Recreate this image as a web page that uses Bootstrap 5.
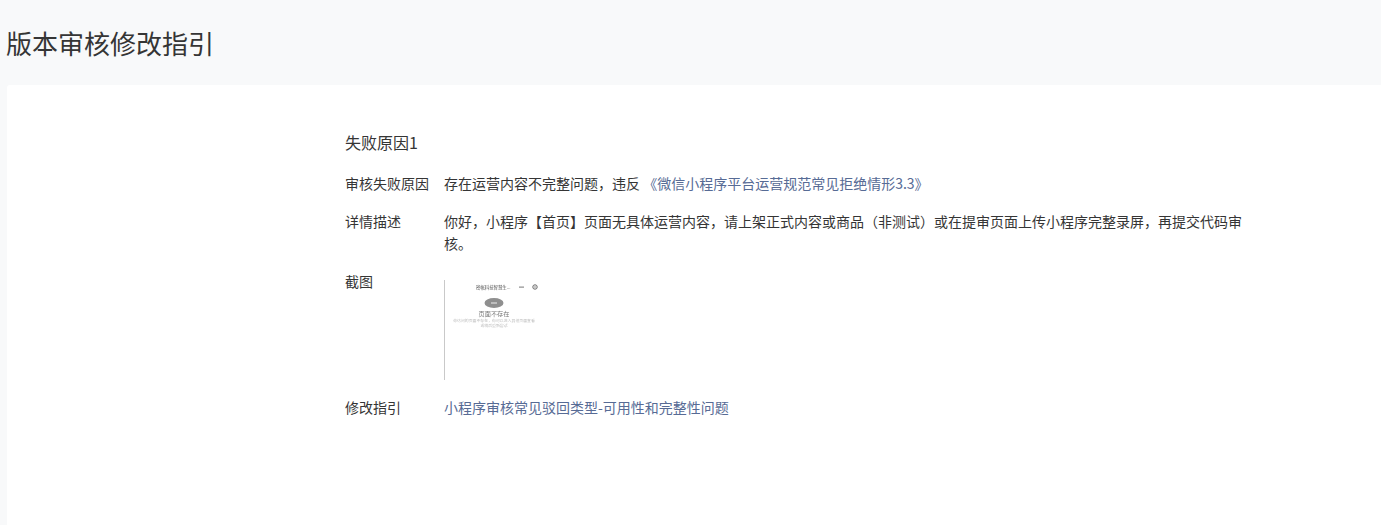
<!DOCTYPE html>
<html lang="zh-CN">
<head>
<meta charset="utf-8">
<title>版本审核修改指引</title>
<link href="https://cdn.jsdelivr.net/npm/bootstrap@5.3.0/dist/css/bootstrap.min.css" rel="stylesheet">
<style>
html,body{height:100%;}
body{background:#f8f9fa;color:#353535;font-family:"Noto Sans CJK SC","Liberation Sans",sans-serif;font-size:14px;line-height:22px;overflow:hidden;}
.page-head{height:85px;padding-left:6px;}
.page-title{font-size:26px;line-height:36px;font-weight:400;color:#353535;margin:0;}
.sheet{margin-left:7px;min-height:440px;background:#fff;border-radius:3px 0 0 0;padding:45px 0 0 338px;}
.reason-title{font-size:16px;line-height:24px;font-weight:400;margin:0 0 18px;color:#353535;}
.info-row{display:flex;width:900px;margin-bottom:16px;}
.info-label{flex:0 0 99px;}
.info-value{flex:1 1 auto;min-width:0;padding-right:3px;}
.info-value a{color:#576b95;text-decoration:none;}
.shot{display:block;margin-top:10px;width:100px;height:100px;filter:blur(.45px);}
.shot text{font-family:"Noto Sans CJK SC",sans-serif;}
</style>
</head>
<body>
<header class="page-head d-flex align-items-center">
  <h1 class="page-title">版本审核修改指引</h1>
</header>
<main class="sheet">
  <h2 class="reason-title">失败原因1</h2>
  <div class="info-row">
    <div class="info-label">审核失败原因</div>
    <div class="info-value">存在运营内容不完整问题，违反 <a href="#">《微信小程序平台运营规范常见拒绝情形3.3》</a></div>
  </div>
  <div class="info-row">
    <div class="info-label">详情描述</div>
    <div class="info-value">你好，小程序【首页】页面无具体运营内容，请上架正式内容或商品（非测试）或在提审页面上传小程序完整录屏，再提交代码审核。</div>
  </div>
  <div class="info-row">
    <div class="info-label">截图</div>
    <div class="info-value">
      <svg class="shot" viewBox="0 0 100 100" role="img" aria-label="截图">
        <rect x="0" y="0" width="1" height="100" fill="#c9c9c9"/>
        <text x="32" y="9" font-size="4.4" fill="#555">密帐科技智慧生...</text>
        <rect x="75" y="6.6" width="5" height="1" fill="#777"/>
        <circle cx="91" cy="7" r="2.2" fill="none" stroke="#666" stroke-width="1"/>
        <circle cx="91" cy="7" r=".7" fill="#666"/>
        <ellipse cx="50" cy="23" rx="9.5" ry="5" fill="#8f8f8f"/>
        <rect x="47" y="22.5" width="6" height="1" fill="#eee"/>
        <text x="50" y="36" font-size="6.2" fill="#777" text-anchor="middle">页面不存在</text>
        <text x="50" y="42" font-size="3.9" fill="#bbb" text-anchor="middle">你访问的页面不存在，你可以进入其他页面查看</text>
        <text x="50" y="47" font-size="3.9" fill="#bbb" text-anchor="middle">或稍后重新尝试</text>
      </svg>
    </div>
  </div>
  <div class="info-row">
    <div class="info-label">修改指引</div>
    <div class="info-value"><a href="#">小程序审核常见驳回类型-可用性和完整性问题</a></div>
  </div>
</main>
<script src="https://cdn.jsdelivr.net/npm/bootstrap@5.3.0/dist/js/bootstrap.bundle.min.js"></script>
</body>
</html>
